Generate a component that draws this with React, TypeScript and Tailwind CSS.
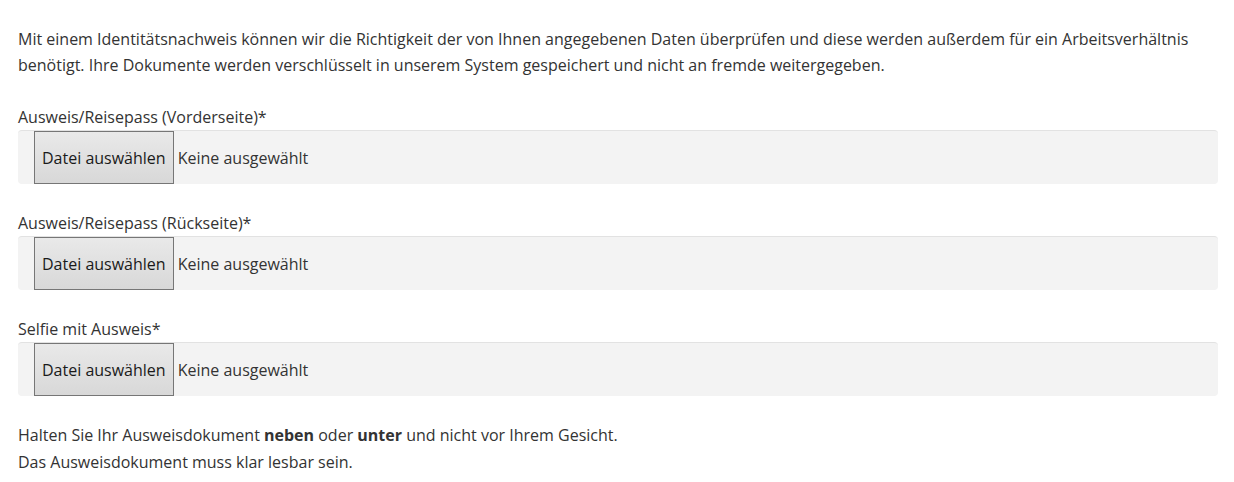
const fields = [
  "Ausweis/Reisepass (Vorderseite)*",
  "Ausweis/Reisepass (Rückseite)*",
  "Selfie mit Ausweis*",
];

const FileField = ({ label }: { label: string }) => (
  <div className="mt-[26px]">
    <label className="block leading-[26px]">{label}</label>
    <div className="flex h-[54px] items-stretch rounded-[4px] border-t border-[#e2e2e2] bg-[#f3f3f3] pl-4">
      <button
        type="button"
        className="border border-[#767676] bg-gradient-to-b from-[#e9e9e9] to-[#d8d8d8] px-[7px] text-[#1a1a1a]"
      >
        Datei auswählen
      </button>
      <span className="flex items-center pl-[4px]">Keine ausgewählt</span>
    </div>
  </div>
);

export default function App() {
  return (
    <div
      className="bg-white pt-[26px] pl-[18px] pr-[16px] text-[16px] text-[#333]"
      style={{ fontFamily: "'Open Sans', sans-serif" }}
    >
      <p className="leading-[26px]">
        Mit einem Identitätsnachweis können wir die Richtigkeit der von Ihnen
        angegebenen Daten überprüfen und diese werden außerdem für ein
        Arbeitsverhältnis benötigt. Ihre Dokumente werden verschlüsselt in
        unserem System gespeichert und nicht an fremde weitergegeben.
      </p>
      {fields.map((f) => (
        <FileField key={f} label={f} />
      ))}
      <p className="mt-[26px] leading-[27px]">
        Halten Sie Ihr Ausweisdokument <b>neben</b> oder <b>unter</b> und
        nicht vor Ihrem Gesicht.
        <br />
        Das Ausweisdokument muss klar lesbar sein.
      </p>
    </div>
  );
}
